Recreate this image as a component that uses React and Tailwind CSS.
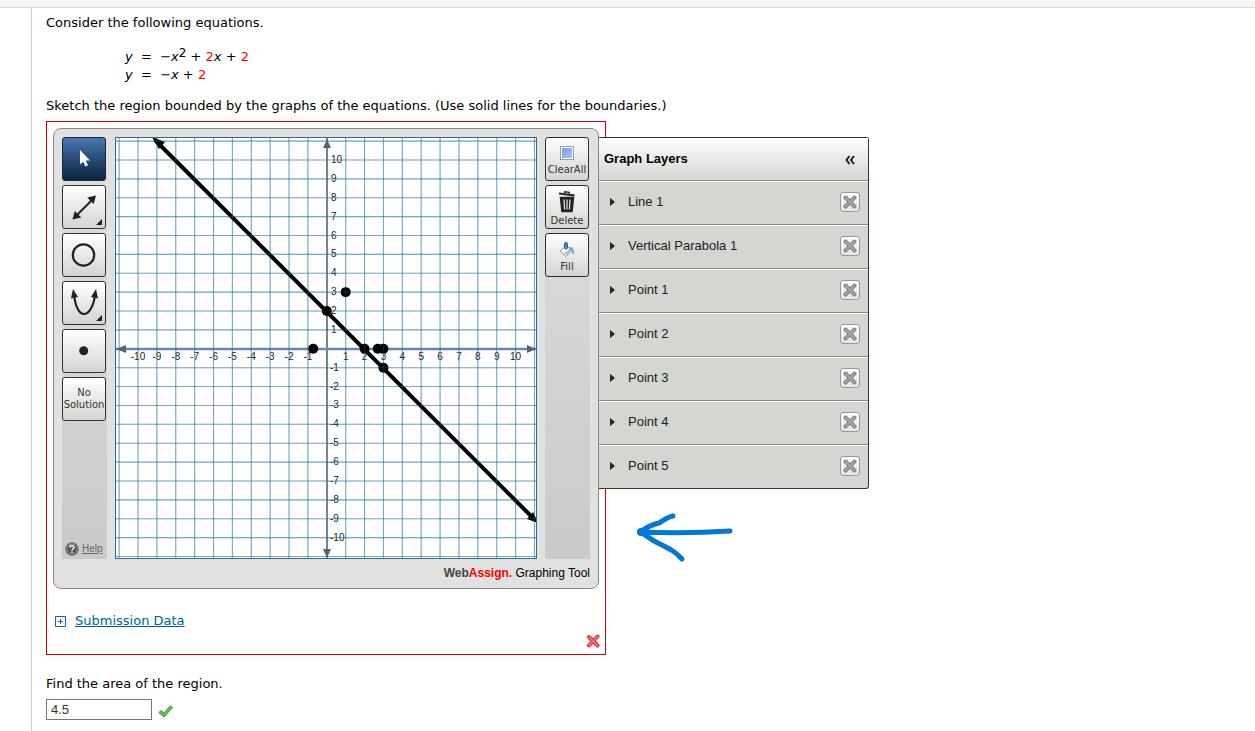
const UNIT = 18.88;
const ORIGIN = 210.8;

const toX = (x) => ORIGIN + x * UNIT;
const toY = (y) => ORIGIN - y * UNIT;

const gridTicks = Array.from({ length: 23 }, (_, i) => i - 11).filter((n) => n !== 0);
const labelTicks = gridTicks.filter((n) => Math.abs(n) <= 10);

const points = [
  [1, 3],
  [0, 2],
  [-0.72, 0],
  [2, 0],
  [2.7, 0],
  [3, 0],
  [3, -1],
];

const layers = [
  "Line 1",
  "Vertical Parabola 1",
  "Point 1",
  "Point 2",
  "Point 3",
  "Point 4",
  "Point 5",
];

const buttonBase =
  "flex h-11 w-11 flex-col items-center justify-center rounded-[3px] border border-[#333] bg-linear-to-b from-white to-[#d3d5d0] text-[10px] leading-3 text-[#333]";

function CursorIcon() {
  return (
    <svg width="42" height="42" viewBox="0 0 42 42">
      <path d="M17 12v14.5l3.2-2.8 2.2 4.800 2.600-1.200-2.200-4.700h4.200z" fill="#fff" />
    </svg>
  );
}

function LineIcon() {
  return (
    <svg width="42" height="42" viewBox="0 0 42 42" fill="#222">
      <path d="M12.500 30.500 30 13" stroke="#222" strokeWidth="2" />
      <path d="M33 9.500l-2.300 8.500-6.500-6.500z" />
      <path d="M9.500 33.500l2.300-8.500 6.500 6.500z" />
      <path d="M39 33v6h-6z" />
    </svg>
  );
}

function CircleIcon() {
  return (
    <svg width="42" height="42" viewBox="0 0 42 42">
      <circle cx="20.500" cy="21" r="10.700" fill="none" stroke="#222" strokeWidth="2.200" />
    </svg>
  );
}

function ParabolaIcon() {
  return (
    <svg width="42" height="42" viewBox="0 0 42 42" fill="#222">
      <path
        d="M11 12C12 24 16 32 21 32S31 24 32 12"
        fill="none"
        stroke="#222"
        strokeWidth="2.200"
      />
      <path d="M10 7l5 8-7 1.500z" />
      <path d="M33 7l2 9.500-7-1.500z" />
      <path d="M39 33v6h-6z" />
    </svg>
  );
}

function PointIcon() {
  return (
    <svg width="42" height="42" viewBox="0 0 42 42">
      <circle cx="20.700" cy="20.700" r="4.500" fill="#222" />
    </svg>
  );
}

function ClearIcon() {
  return (
    <svg width="14" height="14" viewBox="0 0 14 14">
      <defs>
        <linearGradient id="clear-fill" x2="1" y2="1">
          <stop stopColor="#7ba1dc" />
          <stop offset="1" stopColor="#a5c1ec" />
        </linearGradient>
      </defs>
      <rect x=".5" y=".5" width="13" height="13" fill="#fff" stroke="#8a9cba" />
      <rect x="2" y="2" width="10" height="10" fill="url(#clear-fill)" />
    </svg>
  );
}

function TrashIcon() {
  return (
    <svg width="18" height="22" viewBox="0 0 18 22" fill="none" stroke="#222">
      <path d="M2.500 6.500h13l-1.500 14h-10z" fill="#222" strokeWidth="1.500" />
      <path d="M6 8.500l.6 10M9 8.500v10M12 8.500l-.6 10" stroke="#eee" strokeWidth="1.200" />
      <path d="M1 2.500l15.500 2" strokeWidth="2" />
      <path d="M6.500 2.500l.3-1.700 4.400.6v1.700" strokeWidth="1.300" />
    </svg>
  );
}

function FillIcon() {
  return (
    <svg width="16" height="16" viewBox="0 0 16 16">
      <path d="M1 9l6.500-5.500L13 8.500 6.500 14.500z" fill="#f2f2f2" stroke="#999" />
      <path d="M4 12l5 1 4-4.500-2-1.500z" fill="#b9bcc0" />
      <path d="M10 5c3-.5 5.500 2 5 6.500-.8 1-1.800.5-2-.5 0-2-1-3.500-3-4z" fill="#7ba6d4" />
      <rect x="5.500" y=".5" width="3" height="6.500" rx="1.500" fill="#5689c9" stroke="#2c5b9e" />
    </svg>
  );
}

function Graph() {
  return (
    <div className="size-[422px] shrink-0 border border-[#2c689f] bg-white">
      <svg width="420" height="420" viewBox="0 0 420 420" role="img" aria-label="Graph">
        <g className="font-['Liberation_Sans',sans-serif] text-[10px]" fill="#222">
          {labelTicks.map((n) => (
            <text key={`x${n}`} x={toX(n)} y="222" textAnchor="middle">
              {n}
            </text>
          ))}
          {labelTicks.map((n) => (
            <text key={`y${n}`} x={n > 0 ? 215 : 214} y={toY(n) + 3}>
              {n}
            </text>
          ))}
        </g>

        <path d="M0 211h420" stroke="#6488ae" strokeWidth="2.600" />
        <path d="M211 0v420" stroke="#73868f" strokeWidth="2" />
        <g fill="#56656c">
          <path d="M0 211l10-4v8z" />
          <path d="M420 211l-9-4v8z" />
          <path d="M211 1l4 9h-8z" />
          <path d="M211 420l4-9h-8z" />
        </g>

        <g stroke="#1f7399" strokeOpacity=".4" strokeWidth="1.100">
          {gridTicks.map((n) => (
            <line key={`v${n}`} x1={toX(n)} x2={toX(n)} y1="0" y2="420" />
          ))}
          {gridTicks.map((n) => (
            <line key={`h${n}`} x1="0" x2="420" y1={toY(n)} y2={toY(n)} />
          ))}
        </g>

        <path d="M39 2L419 382" stroke="#000" strokeWidth="4" />
        <path d="M36-1l13 5-6 7z" />
        <path d="M422 385l-11-4 6-7z" />
        {points.map(([x, y]) => (
          <circle key={`${x},${y}`} cx={toX(x)} cy={toY(y)} r="5" />
        ))}

        <g stroke="#1f7399" strokeOpacity=".34" strokeWidth="1.100">
          {gridTicks.map((n) => (
            <line key={`v${n}`} x1={toX(n)} x2={toX(n)} y1="0" y2="420" />
          ))}
          {gridTicks.map((n) => (
            <line key={`h${n}`} x1="0" x2="420" y1={toY(n)} y2={toY(n)} />
          ))}
        </g>
      </svg>
    </div>
  );
}

function Toolbar() {
  return (
    <div className="flex w-[45px] shrink-0 flex-col gap-1 bg-linear-to-b from-[#dedede] to-[#cacaca]">
      <button
        aria-label="Select"
        className="flex h-11 w-11 items-center justify-center rounded-[3px] border border-[#1c2838] bg-linear-to-b from-[#4a78b0] to-[#0b2340]"
      >
        <CursorIcon />
      </button>
      <button aria-label="Line" className={buttonBase}>
        <LineIcon />
      </button>
      <button aria-label="Circle" className={buttonBase}>
        <CircleIcon />
      </button>
      <button aria-label="Parabola" className={buttonBase}>
        <ParabolaIcon />
      </button>
      <button aria-label="Point" className={buttonBase}>
        <PointIcon />
      </button>
      <button className={buttonBase}>
        <span>No</span>
        <span>Solution</span>
      </button>
      <a
        href="#help"
        className="mt-auto flex items-center gap-[3px] pb-[3px] pl-[3px] font-['Liberation_Sans',sans-serif] text-[10px] leading-3 text-[#666]"
      >
        <svg width="14" height="14" viewBox="0 0 14 14">
          <circle cx="7" cy="7" r="6.300" fill="#555" stroke="#777" />
          <circle cx="7" cy="7" r="5.200" fill="none" stroke="#aaa" strokeWidth=".7" />
          <path
            d="M5 5.500C5 3 9 3 9 5.400 9 6.700 7 6.800 7 8.500M7 9.600v1.500"
            fill="none"
            stroke="#fff"
            strokeWidth="1.500"
          />
        </svg>
        <span className="underline">Help</span>
      </a>
    </div>
  );
}

function ActionBar() {
  return (
    <div className="flex w-[45px] shrink-0 flex-col gap-1 bg-linear-to-b from-[#dedede] to-[#cacaca]">
      <button className={`${buttonBase} gap-1 pt-1`}>
        <ClearIcon />
        <span className="whitespace-nowrap">ClearAll</span>
      </button>
      <button className={`${buttonBase} gap-[2px] pt-1`}>
        <TrashIcon />
        <span>Delete</span>
      </button>
      <button className={`${buttonBase} gap-[3px] pt-1`}>
        <FillIcon />
        <span>Fill</span>
      </button>
    </div>
  );
}

function LayersPanel() {
  return (
    <aside className="absolute top-2 left-full w-[271px] rounded-r-[3px] border border-[#333] border-l-[#888] bg-[#d4d6d1] font-['Liberation_Sans',sans-serif] text-[13px] text-[#222]">
      <div className="flex h-[43px] items-center justify-between border-b border-[#888] bg-linear-to-b from-white to-[#d4d6d1] pr-3 pl-[5px]">
        <h2 className="font-bold text-black">Graph Layers</h2>
        <button aria-label="Collapse layers" className="flex size-3 items-center">
          <svg width="12" height="12" viewBox="0 0 12 12" fill="none" stroke="#222" strokeWidth="2">
            <path d="M5.500 3L2.500 7l3 4M10 3L7 7l3 4" />
          </svg>
        </button>
      </div>
      <ul>
        {layers.map((name) => (
          <li
            key={name}
            className="flex h-11 items-center border-t border-b border-t-white border-b-[#888] pr-2 pb-[2px] pl-[11px] last:h-[43px] last:border-b-0"
          >
            <button className="flex items-center gap-[13px]">
              <svg width="5" height="8" viewBox="0 0 5 8">
                <path d="M0 0l5 4-5 4z" fill="#222" />
              </svg>
              {name}
            </button>
            <button
              aria-label={`Remove ${name}`}
              className="ml-auto flex size-5 items-center justify-center rounded-[3px] border border-[#999] bg-linear-to-b from-white to-[#e4e4e4]"
            >
              <svg width="14" height="14" viewBox="0 0 14 14" strokeLinecap="round">
                <path d="M2.500 2.500l9 9M11.500 2.500l-9 9" stroke="#858585" strokeWidth="4" />
                <path d="M2.500 2.500l9 9M11.500 2.500l-9 9" stroke="#a3a3a3" strokeWidth="2" />
              </svg>
            </button>
          </li>
        ))}
      </ul>
    </aside>
  );
}

function GraphingTool() {
  return (
    <div className="relative w-[546px] rounded-lg border border-[#888] bg-[#e1e1df] px-2 pt-2">
      <div className="flex gap-2">
        <Toolbar />
        <Graph />
        <ActionBar />
      </div>
      <p className="pt-[5px] pb-[6px] text-right font-['Liberation_Sans',sans-serif] text-[12px] leading-[18px] text-black">
        <span className="font-bold text-[#444]">Web</span>
        <span className="font-bold text-[#f00]">Assign.</span> Graphing Tool
      </p>
      <LayersPanel />
      <svg
        className="absolute top-[380px] left-[580px]"
        width="104"
        height="54"
        viewBox="0 0 104 54"
        fill="none"
        stroke="#0078d7"
        strokeWidth="5"
        strokeLinecap="round"
        strokeLinejoin="round"
      >
        <path d="M96 22C65 24 35 24 6 23M39 7C33 8 29 12 25 14C20 15 13 18 6 23C14 27 18 32 26 35C36 40 42 43 48 50" />
        <circle cx="7" cy="23" r="1.500" />
      </svg>
    </div>
  );
}

export default function App() {
  return (
    <div className="flex min-h-screen flex-col bg-white font-['DejaVu_Sans',sans-serif] text-[13px] leading-[18px] text-black">
      <div className="h-2 border-b border-[#ddd] bg-[#f6f6f6]" />
      <main className="ml-[31px] grow border-l border-[#ccc] pt-[6px] pl-[14px]">
        <p>Consider the following equations.</p>

        <div className="mt-4 ml-[79px]">
          <p>
            <i>y</i> &nbsp;= &nbsp;−<i>x</i>
            <sup className="-top-1 text-[12px] leading-none">2</sup> +{" "}
            <span className="text-[#f00]">2</span>
            <i>x</i> + <span className="text-[#f00]">2</span>
          </p>
          <p>
            <i>y</i> &nbsp;= &nbsp;−<i>x</i> + <span className="text-[#f00]">2</span>
          </p>
        </div>

        <p className="mt-[13px]">
          Sketch the region bounded by the graphs of the equations. (Use solid lines for the
          boundaries.)
        </p>

        <section className="mt-[6px] w-[560px] border border-[#d00000] p-[6px] pr-[5px]">
          <GraphingTool />
          <div className="mt-[23px] ml-[2px] flex items-center gap-[9px]">
            <svg width="11" height="11" viewBox="0 0 11 11" fill="none" stroke="#1b5e99">
              <path d="M.5.500h10v10h-10zM3 5.500h5M5.500 3v5" />
            </svg>
            <a href="#submission" className="text-[#0060a0] underline">
              Submission Data
            </a>
          </div>
          <div className="mt-1 flex justify-end">
            <svg width="14" height="14" viewBox="0 0 14 14" strokeLinecap="round" role="img" aria-label="Incorrect">
              <path d="M3 3l8.500 8.500M11.500 2.500L3 11.500" stroke="#d8343c" strokeWidth="4" />
              <path d="M3 3l8.500 8.500M11.500 2.500L3 11.500" stroke="#f8666c" strokeWidth="2" />
            </svg>
          </div>
        </section>

        <label htmlFor="area" className="mt-5 block">
          Find the area of the region.
        </label>
        <div className="mt-[6px] flex items-center gap-[6px]">
          <input
            id="area"
            defaultValue="4.5"
            className="h-[21px] w-[106px] border border-[#767676] bg-white px-1 font-['Liberation_Sans',sans-serif] text-[13px] text-[#333]"
          />
          <svg className="mt-1" width="15" height="13" viewBox="0 0 15 13" role="img" aria-label="Correct">
            <path
              d="M.8 7.500l2.500-2 2.500 2.500L12.500.8l2 1.700L6 12z"
              fill="#69be59"
              stroke="#3c9139"
              strokeLinejoin="round"
            />
          </svg>
        </div>
      </main>
    </div>
  );
}
